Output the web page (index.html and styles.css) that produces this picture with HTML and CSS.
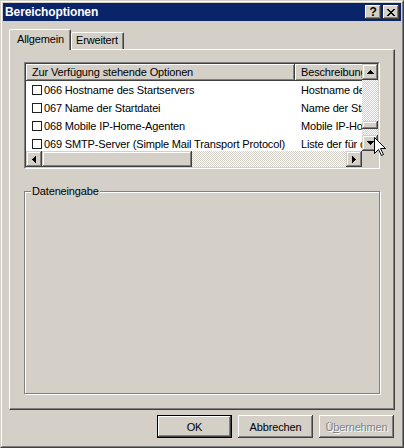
FILE: index.html
```html
<!DOCTYPE html>
<html lang="de">
<head>
  <meta charset="UTF-8" />
  <title>Bereichoptionen</title>
  <link rel="stylesheet" href="styles.css">
</head>
<body>
  <div class="window">
    <div class="frame">
      <div class="titlebar">
        <span class="title">Bereichoptionen</span>
        <div class="caption-btns">
          <div class="cbtn help">?</div>
          <div class="cbtn">
            <svg width="8" height="7" viewBox="0 0 8 7"><path d="M0 0h2v1h1v1h2V1h1V0h2v1H7v1H6v1H5v1h1v1h1v1h1v1H6V6H5V5H3v1H2v1H0V6h1V5h1V4h1V3H2V2H1V1H0z"/></svg>
          </div>
        </div>
      </div>

      <div class="content">
        <div class="tabs">
          <div class="tab active">Allgemein</div>
          <div class="tab">Erweitert</div>
        </div>

        <div class="panel">
          <div class="listview">
            <div class="lv-grid">
              <div class="lv-content">
                <div class="lv-header">
                  <div class="hcol c1">Zur Verfügung stehende Optionen</div>
                  <div class="hcol c2">Beschreibung</div>
                </div>
                <div class="lv-rows">
                  <div class="row"><div class="cell1"><span class="check"></span>066 Hostname des Startservers</div><div class="cell2">Hostname des Startservers</div></div>
                  <div class="row"><div class="cell1"><span class="check"></span>067 Name der Startdatei</div><div class="cell2">Name der Startdatei</div></div>
                  <div class="row"><div class="cell1"><span class="check"></span>068 Mobile IP-Home-Agenten</div><div class="cell2">Mobile IP-Home-Agenten</div></div>
                  <div class="row"><div class="cell1"><span class="check"></span>069 SMTP-Server (Simple Mail Transport Protocol)</div><div class="cell2">Liste der für den Client verfügbaren SMTP-Server</div></div>
                </div>
              </div>

              <div class="vscroll">
                <div class="sbtn"><svg width="7" height="4"><path d="M3 0h1v1h1v1h1v1h1v1H0V3h1V2h1V1h1z"/></svg></div>
                <div class="track vtrack"><div class="thumb vthumb"></div></div>
                <div class="sbtn"><svg width="7" height="4"><path d="M0 0h7v1H6v1H5v1H4v1H3V3H2V2H1V1H0z"/></svg></div>
              </div>

              <div class="hscroll">
                <div class="sbtn"><svg width="4" height="7"><path d="M3 0h1v7H3V6H2V5H1V4H0V3h1V2h1V1h1z"/></svg></div>
                <div class="thumb hthumb"></div>
                <div class="track htrack"></div>
                <div class="sbtn"><svg width="4" height="7"><path d="M0 0h1v1h1v1h1v1h1v1H3v1H2v1H1v1H0z"/></svg></div>
              </div>
              <div class="corner"></div>
            </div>
          </div>

          <div class="groupbox">
            <span class="legend">Dateneingabe</span>
          </div>
        </div>

        <div class="buttons">
          <button class="btn default">OK</button>
          <button class="btn">Abbrechen</button>
          <button class="btn disabled">Ü<u>b</u>ernehmen</button>
        </div>
      </div>
    </div>

    <svg class="cursor" width="13" height="20" viewBox="0 0 13 20">
      <path d="M0.5 0.5V16.5L4.5 12.5L7.5 18.5L9.5 17.5L6.5 11.5H11.5Z" fill="#fff" stroke="#000"/>
    </svg>
  </div>
</body>
</html>
```

FILE: styles.css
```css
body {
  margin: 0;
  font-family: "Liberation Sans", Arial, sans-serif;
  font-size: 11px;
  letter-spacing: -0.15px;
  color: #000;
  background: #d4d0c8;
}
.window {
  position: relative;
  width: 404px;
  height: 448px;
  box-sizing: border-box;
  background: #d4d0c8;
  border: 1px solid;
  border-color: #d4d0c8 #404040 #404040 #d4d0c8;
}
.frame {
  height: 100%;
  box-sizing: border-box;
  border: 1px solid;
  border-color: #fff #808080 #808080 #fff;
  padding: 1px;
  display: flex;
  flex-direction: column;
}

/* title bar */
.titlebar {
  height: 18px;
  flex-shrink: 0;
  background: #0a246a;
  display: flex;
  align-items: center;
  justify-content: space-between;
  padding: 0 2px;
}
.title {
  color: #fff;
  font-weight: bold;
  font-size: 12px;
  letter-spacing: -0.1px;
}
.caption-btns {
  display: flex;
  gap: 2px;
}
.cbtn {
  width: 16px;
  height: 14px;
  box-sizing: border-box;
  background: #d4d0c8;
  box-shadow: inset -1px -1px #404040, inset 1px 1px #fff, inset -2px -2px #808080;
  display: flex;
  align-items: center;
  justify-content: center;
}
.cbtn.help {
  font-weight: bold;
  font-size: 12px;
  line-height: 14px;
}

/* body */
.content {
  flex: 1;
  display: flex;
  flex-direction: column;
  padding: 8px 6px 0;
}
.tabs {
  display: flex;
  align-items: flex-end;
  height: 20px;
  position: relative;
  z-index: 1;
}
.tab {
  box-sizing: border-box;
  height: 17px;
  line-height: 15px;
  padding: 0 5px 0 4px;
  background: #d4d0c8;
  border: 1px solid;
  border-bottom: none;
  border-color: #fff #404040 transparent #fff;
  box-shadow: inset -1px 0 #808080;
  border-radius: 2px 2px 0 0;
}
.tab.active {
  height: 21px;
  margin-bottom: -1px;
  line-height: 18px;
  padding: 0 6px 0 7px;
}

.panel {
  height: 361px;
  box-sizing: border-box;
  border: 1px solid;
  border-color: #fff #404040 #404040 #fff;
  box-shadow: inset -1px -1px #808080;
  padding: 12px 14px 14px;
}

/* list view */
.listview {
  width: 356px;
  height: 107px;
  box-sizing: border-box;
  border: 1px solid;
  border-color: #808080 #fff #fff #808080;
}
.lv-grid {
  height: 100%;
  box-sizing: border-box;
  border: 1px solid;
  border-color: #404040 #d4d0c8 #d4d0c8 #404040;
  display: grid;
  grid-template-columns: 1fr 16px;
  grid-template-rows: 1fr 16px;
}
.lv-content {
  overflow: hidden;
  background: #fff;
  min-width: 0;
}
.lv-header,
.row {
  display: flex;
  white-space: nowrap;
}
.hcol {
  height: 17px;
  line-height: 17px;
  box-sizing: border-box;
  padding-left: 6px;
  background: #d4d0c8;
  flex-shrink: 0;
  box-shadow: inset -1px -1px #404040, inset 1px 1px #fff, inset -2px -2px #808080;
}
.c1,
.cell1 {
  width: 269px;
  flex-shrink: 0;
}
.c2,
.cell2 {
  width: 220px;
  flex-shrink: 0;
}
.row {
  height: 18px;
  align-items: center;
}
.cell1 {
  display: flex;
  align-items: center;
  box-sizing: border-box;
  padding-left: 6px;
  overflow: hidden;
}
.cell2 {
  padding-left: 6px;
}
.check {
  width: 10px;
  height: 10px;
  box-sizing: border-box;
  border: 1px solid #202020;
  background: #fff;
  margin-right: 2px;
}

/* scroll bars */
.vscroll {
  display: flex;
  flex-direction: column;
}
.hscroll {
  display: flex;
}
.sbtn {
  width: 16px;
  height: 16px;
  flex-shrink: 0;
  box-sizing: border-box;
  background: #d4d0c8;
  box-shadow: inset -1px -1px #404040, inset 1px 1px #d4d0c8, inset -2px -2px #808080, inset 2px 2px #fff;
  display: flex;
  align-items: center;
  justify-content: center;
}
.track {
  flex: 1;
  background-color: #fff;
  background-image: conic-gradient(#d4d0c8 25%, #fff 0 50%, #d4d0c8 0 75%, #fff 0);
  background-size: 2px 2px;
}
.thumb {
  background: #d4d0c8;
  box-shadow: inset -1px -1px #404040, inset 1px 1px #d4d0c8, inset -2px -2px #808080, inset 2px 2px #fff;
}
.vtrack {
  display: flex;
  flex-direction: column;
}
.vthumb {
  height: 8px;
  margin-top: 41px;
}
.hthumb {
  width: 150px;
  flex-shrink: 0;
}
.corner {
  background: #d4d0c8;
}

/* group box */
.groupbox {
  position: relative;
  width: 356px;
  height: 203px;
  box-sizing: border-box;
  margin-top: 22px;
  border: 1px solid #808080;
  box-shadow: inset 1px 1px #fff, 1px 1px #fff;
}
.legend {
  position: absolute;
  top: -7px;
  left: 6px;
  padding: 0 1px;
  line-height: 13px;
  background: #d4d0c8;
}

/* dialog buttons */
.buttons {
  display: flex;
  justify-content: flex-end;
  gap: 6px;
  margin-top: 5px;
  padding-right: 1px;
}
.btn {
  width: 75px;
  height: 23px;
  padding: 0;
  border: none;
  background: #d4d0c8;
  font-family: inherit;
  font-size: 11px;
  letter-spacing: inherit;
  color: #000;
  box-shadow: inset -1px -1px #404040, inset 1px 1px #fff, inset -2px -2px #808080, inset 2px 2px #d4d0c8;
}
.btn.default {
  box-shadow: inset 0 0 0 1px #000, inset -2px -2px #404040, inset 2px 2px #fff, inset -3px -3px #808080;
}
.btn.disabled {
  color: #808080;
  text-shadow: 1px 1px 0 #fff;
}

.cursor {
  position: absolute;
  left: 373px;
  top: 136px;
}
```
